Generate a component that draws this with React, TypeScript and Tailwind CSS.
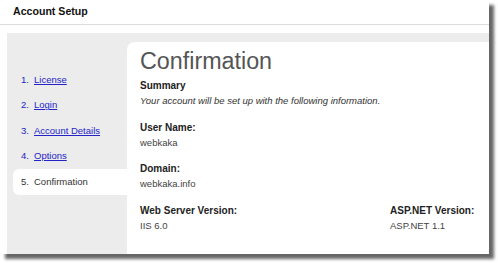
const steps = [
  { n: 1, label: 'License', link: true },
  { n: 2, label: 'Login', link: true },
  { n: 3, label: 'Account Details', link: true },
  { n: 4, label: 'Options', link: true },
  { n: 5, label: 'Confirmation', link: false },
];

const Field: React.FC<{ label: string; value: string; className?: string }> = ({ label, value, className }) => (
  <div className={className}>
    <div className="text-[10px] font-bold text-[#222] leading-[15px]">{label}</div>
    <div className="text-[9.5px] text-[#444] leading-[15px]">{value}</div>
  </div>
);

export default function App() {
  return (
    <div className="w-[498px] h-[263px] bg-white font-['Liberation_Sans',Arial,sans-serif]">
      <div className="w-[489px] h-[254px] bg-white flex flex-col shadow-[5px_5px_3px_rgba(0,0,0,0.6)]">
        <div className="h-[25px] border-b border-[#dcdcdc] pl-[13px] flex items-center">
          <span className="text-[10.6px] font-bold text-[#111]">Account Setup</span>
        </div>

        <div className="flex flex-1 mt-[8px] ml-[7px] bg-[#ececec]">
          <ol className="w-[120px] pt-[34px]">
            {steps.map((s) =>
              s.link ? (
                <li key={s.n} className="h-[25.5px] ml-[6px] pl-[8px] flex items-center text-[9.5px] text-[#2323c8]">
                  <span className="w-[13px]">{s.n}.</span>
                  <a href="#" className="underline">{s.label}</a>
                </li>
              ) : (
                <li key={s.n} className="h-[25.5px] ml-[6px] pl-[8px] flex items-center text-[9.5px] text-[#333] bg-white rounded-l-[6px]">
                  <span className="w-[13px]">{s.n}.</span>
                  <span>{s.label}</span>
                </li>
              )
            )}
          </ol>

          <div className="flex-1 mt-[9px] bg-white rounded-tl-[8px] pl-[13px] pt-[8px]">
            <h1 className="text-[23.3px] leading-none text-[#555] mb-[4.5px]">Confirmation</h1>
            <div className="mb-[12px]">
              <div className="text-[10px] font-bold text-[#222] leading-[15px]">Summary</div>
              <div className="text-[9.5px] italic text-[#333] leading-[15px]">
                Your account will be set up with the following information.
              </div>
            </div>
            <Field label="User Name:" value="webkaka" className="mb-[11px]" />
            <Field label="Domain:" value="webkaka.info" className="mb-[12px]" />
            <div className="flex">
              <Field label="Web Server Version:" value="IIS 6.0" className="w-[250px]" />
              <Field label="ASP.NET Version:" value="ASP.NET 1.1" />
            </div>
          </div>
        </div>
      </div>
    </div>
  );
}
